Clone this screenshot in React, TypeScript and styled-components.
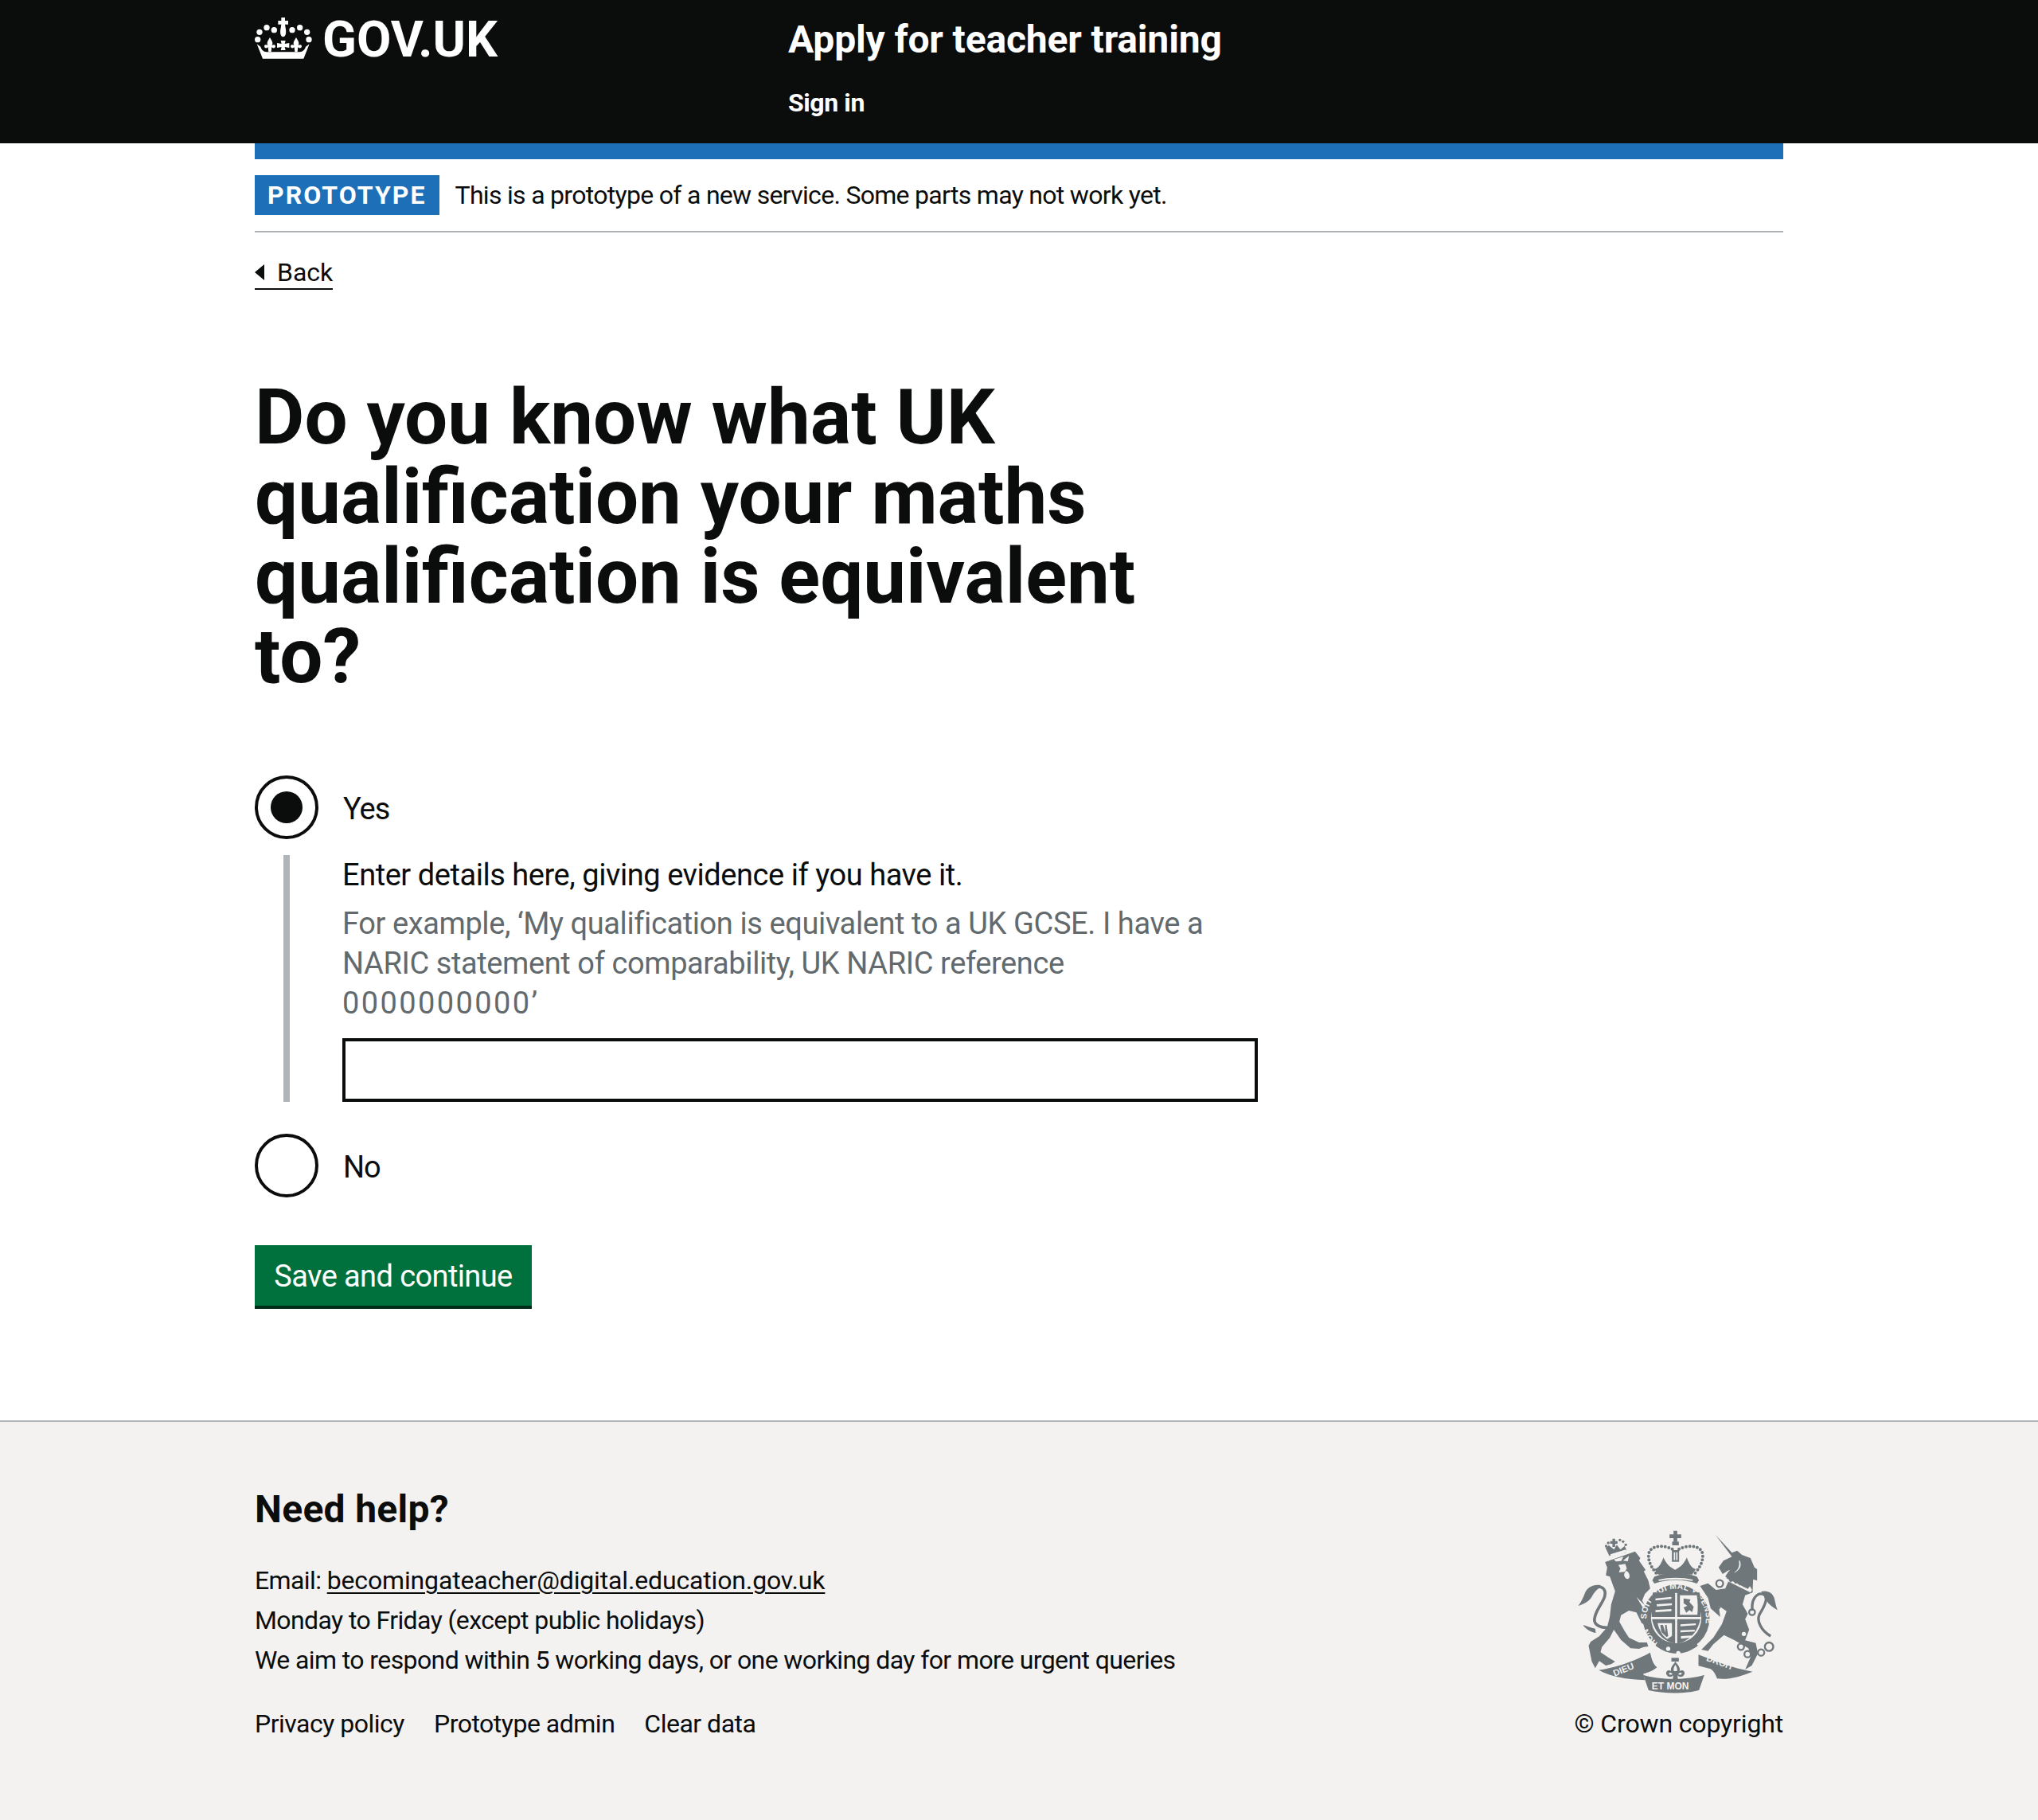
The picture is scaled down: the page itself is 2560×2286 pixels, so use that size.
import React from "react";
import styled, { createGlobalStyle } from "styled-components";

const Global = createGlobalStyle`
  html, body { margin: 0; padding: 0; background: #fff; }
  body { font-family: Roboto, "Noto Sans", Arial, sans-serif; color: #0b0c0c; }
  * { box-sizing: border-box; }
`;

const Page = styled.div`
  width: 2560px;
  min-height: 2286px;
  display: flex;
  flex-direction: column;
`;
const Header = styled.header`
  background: #0b0c0c;
  height: 180px;
  padding: 20px 320px 0;
  display: flex;
  color: #fff;
`;
const LogoBox = styled.div`
  width: 670px;
  display: flex;
  align-items: flex-start;
  gap: 13px;
`;
const LogoSvg = styled.svg`
  display: block;
  margin-top: 1px;
`;
const LogoText = styled.span`
  font-size: 63px;
  line-height: 60px;
  font-weight: 700;
`;
const ServiceBox = styled.div`
  display: flex;
  flex-direction: column;
  gap: 28px;
`;
const ServiceName = styled.div`
  font-size: 48px;
  line-height: 60px;
  font-weight: 700;
  letter-spacing: -0.15px;
`;
const SignIn = styled.div`
  font-size: 32px;
  line-height: 42px;
  font-weight: 700;
  letter-spacing: -0.4px;
`;
const Container = styled.div`
  width: 1920px;
  margin: 0 320px;
`;
const BlueBar = styled.div`
  height: 20px;
  background: #1d70b8;
`;
const Banner = styled.div`
  display: flex;
  align-items: center;
  gap: 20px;
  padding: 20px 0;
  height: 92px;
  border-bottom: 2px solid #b1b4b6;
`;
const Tag = styled.strong`
  background: #1d70b8;
  color: #fff;
  font-size: 32px;
  line-height: 50px;
  height: 50px;
  padding: 0 16px;
  letter-spacing: 2.05px;
  font-weight: 700;
`;
const BannerText = styled.span`
  font-size: 32px;
  line-height: 40px;
  letter-spacing: -0.7px;
`;
const BackLink = styled.a`
  display: inline-flex;
  align-items: center;
  margin-top: 30px;
  height: 42px;
  border-bottom: 2px solid #0b0c0c;
  font-size: 32px;
  line-height: 40px;
  color: #0b0c0c;
  &::before {
    content: "";
    width: 0;
    height: 0;
    margin-right: 16px;
    border-style: solid;
    border-width: 10px 12px 10px 0;
    border-color: transparent #0b0c0c transparent transparent;
  }
`;
const Heading = styled.h1`
  margin: 110px 0 0;
  width: 1150px;
  font-size: 96px;
  line-height: 100px;
  font-weight: 700;
`;
const Form = styled.form`
  margin-top: 100px;
  display: flex;
  flex-direction: column;
`;
const RadioRow = styled.div`
  display: flex;
  align-items: center;
  gap: 30px;
  height: 80px;
`;
const RadioCircle = styled.span<{ $checked?: boolean }>`
  width: 80px;
  height: 80px;
  border: 4px solid #0b0c0c;
  border-radius: 50%;
  display: flex;
  align-items: center;
  justify-content: center;
  &::after {
    content: "";
    display: ${(p) => (p.$checked ? "block" : "none")};
    width: 40px;
    height: 40px;
    border-radius: 50%;
    background: #0b0c0c;
  }
`;
const RadioLabel = styled.span`
  font-size: 38px;
  line-height: 50px;
  padding: 3px 0 0 1px;
  letter-spacing: -1px;
`;
const Conditional = styled.div`
  margin: 20px 0 40px 36px;
  padding-left: 66px;
  border-left: 8px solid #b1b4b6;
  height: 310px;
`;
const FieldLabel = styled.div`
  font-size: 38px;
  line-height: 50px;
  letter-spacing: -0.45px;
`;
const Hint = styled.div`
  margin-top: 11px;
  width: 1120px;
  font-size: 38px;
  line-height: 50px;
  color: #626a6e;
  letter-spacing: -0.4px;
`;
const HintDigits = styled.span`
  letter-spacing: 2.4px;
`;
const TextInput = styled.input`
  display: block;
  margin-top: 19px;
  width: 1150px;
  height: 80px;
  border: 4px solid #0b0c0c;
  border-radius: 0;
  background: #fff;
`;
const Button = styled.button`
  margin-top: 60px;
  width: 348px;
  height: 80px;
  align-self: flex-start;
  border: 0;
  border-bottom: 4px solid #002d18;
  border-radius: 0;
  background: #00703c;
  color: #fff;
  font-family: inherit;
  font-size: 38px;
  line-height: 50px;
  letter-spacing: -0.6px;
  padding: 2px 0 0;
`;
const Footer = styled.footer`
  margin-top: 140px;
  flex: 1;
  background: #f3f2f1;
  border-top: 2px solid #b1b4b6;
  padding: 80px 320px 0;
  display: flex;
  justify-content: space-between;
`;
const FooterMain = styled.div`
  display: flex;
  flex-direction: column;
`;
const HelpTitle = styled.h2`
  margin: 0 0 34px;
  font-size: 48px;
  line-height: 60px;
  font-weight: 700;
  letter-spacing: 0.3px;
`;
const FooterLine = styled.div`
  font-size: 32px;
  line-height: 50px;
  letter-spacing: -0.6px;
`;
const FooterAnchor = styled.a`
  color: #0b0c0c;
  letter-spacing: -0.15px;
  text-decoration: underline;
  text-decoration-thickness: 2px;
  text-underline-offset: 4px;
`;
const FooterLinks = styled.div`
  display: flex;
  gap: 37px;
  margin-top: 30px;
`;
const PlainLink = styled.a`
  font-size: 32px;
  line-height: 50px;
  color: #0b0c0c;
  letter-spacing: -0.5px;
`;
const CrestBox = styled.div`
  display: flex;
  flex-direction: column;
  align-items: flex-end;
  margin-top: 56px;
`;
const CrestSvg = styled.svg`
  display: block;
  margin-right: 6px;
`;
const Copyright = styled.div`
  margin-top: 13px;
  font-size: 32px;
  line-height: 50px;
  letter-spacing: -0.15px;
`;

const CrownLogo = () => (
  <LogoSvg width="72" height="53" viewBox="60 62 216 159" fill="#fff">
    <path d="M160 65h14v12h12v14h-12l2 14c3 12 3 33-9 33s-12-21-9-33l2-14h-12V77h12z" />
    <circle cx="133" cy="112" r="11" /><circle cx="105" cy="103" r="11" /><circle cx="78" cy="120" r="11" /><circle cx="71" cy="148" r="11" />
    <circle cx="201" cy="112" r="11" /><circle cx="230" cy="103" r="11" /><circle cx="257" cy="120" r="11" /><circle cx="264" cy="148" r="11" />
    <path d="M158 152h18l-3 12 17-3v18l-17-3 3 12h-18l3-12-17 3v-18l17 3z" />
    <path d="M117 140c4 8 10 14 10 22 0 4-1 6-3 8 4-2 14-5 14 4 0 6-8 9-14 3l-2 17h-10l-2-17c-6 6-14 3-14-3 0-9 10-6 14-4-2-2-3-4-3-8 0-8 6-14 10-22z" />
    <path d="M216 140c4 8 10 14 10 22 0 4-1 6-3 8 4-2 14-5 14 4 0 6-8 9-14 3l-2 17h-10l-2-17c-6 6-14 3-14-3 0-9 10-6 14-4-2-2-3-4-3-8 0-8 6-14 10-22z" />
    <path d="M68 165l14 10c4 12 10 18 22 20h126c12-2 18-8 22-20l14-10-22 55H90z" />
  </LogoSvg>
);

const C = "#6f777b";
const B = "#f3f2f1";
const Crest = () => (
  <CrestSvg width="252" height="205" viewBox="70 65 755 615" fill={C}>
    <path d="M188 162l-14-30 12-10 20 16 10-18 14 18 16-14 6 14-2 12z" />
    <path d="M200 97h10v9h9v10h-9v12h-10v-12h-9v-10h9z" />
    <g><circle cx="176" cy="125" r="5" /><circle cx="184" cy="113" r="5" /><circle cx="228" cy="102" r="5" /><circle cx="240" cy="108" r="5" /><circle cx="250" cy="120" r="5" /></g>
    <path d="M192 156l58-18 3 10-58 18z" fill={B} />
    <path d="M172 185L285 145L305 170L300 180L325 215L318 220L335 255L342 285L322 305L312 330L322 350L345 385L345 410L330 425L310 415L290 375L262 368L232 385L226 410L246 445L262 470L300 488L330 488L335 503L318 505L300 512L268 510L232 478L205 440L190 470L160 505L155 525L185 545L210 560L195 570L175 575L150 558L135 585L122 560L110 500L118 485L150 465L180 430L190 390L195 345L210 295L190 240L175 235L180 205Z" />
    <path d="M205 175l36-10-8 16-20 2zM262 162l-22 18 18 2z" fill={B} />
    <path d="M222 196l26-4 6 18-8 12-22 2 6-14z" fill={B} />
    <path d="M250 218c12 2 18 20 12 28-7 8-20-4-18-16z" fill={B} />
    <path d="M150 278c22 2 28 24 16 48-12 26-32 46-34 76-1 20 24 32 52 30" fill="none" stroke={C} strokeWidth="11" />
    <path d="M155 272c-30-4-50 10-58 28-6 16-14 36-26 50 26-8 44-20 52-36 8-14 18-26 30-32z" />
    <path d="M135 436c-16-2-30-10-46-14 8 14 26 26 48 30z" />
    <path d="M290 316l34 34-10 6z" fill={B} />
    <path d="M430 67h14v14h15v14h-15v14h-14V95h-15V81h15z" />
    <rect x="425" y="108" width="25" height="14" />
    <rect x="424" y="140" width="27" height="44" />
    <rect x="431" y="148" width="5" height="30" fill={B} /><rect x="440" y="148" width="5" height="30" fill={B} />
    <g fill="none" stroke={C} strokeWidth="12" strokeDasharray="0 14" strokeLinecap="round">
      <path d="M364 226c-26-30-34-62-24-82 12-22 60-24 88-6" />
      <path d="M512 226c26-30 34-62 24-82-12-22-60-24-88-6" />
    </g>
    <path d="M358 212c14-4 22-12 34-44 10 22 22 36 44 46 22-10 34-24 44-46 12 32 20 40 34 44l-14 20H372z" />
    <path d="M358 240c50-18 110-18 160 0l8 14-8 12c-50-18-110-18-160 0l-8-12z" />
    <path d="M372 252c40-10 92-10 132 0l-4 4c-40-8-84-8-124 0z" fill={B} />
    <circle cx="440" cy="396" r="126" />
    <circle cx="440" cy="396" r="95" fill={B} />
    <path id="garterTop" d="M331 424a112 112 0 1 1 218 0a112 112 0 0 1-28 52" fill="none" />
    <path id="garterLeft" d="M372 490a116 116 0 0 1-42-62" fill="none" />
    <text fill={B} fontFamily="Liberation Sans, Arial, sans-serif" fontSize="31" fontWeight="700" letterSpacing="1"><textPath href="#garterTop" startOffset="24">SOIT QUI MAL Y PENSE</textPath></text>
    <text fill={B} fontFamily="Liberation Sans, Arial, sans-serif" fontSize="31" fontWeight="700"><textPath href="#garterLeft">HON</textPath></text>
    <path d="M352 300h84v92h-88c-2-30-2-62 4-92zM444 300h84c6 30 6 62 4 92h-88z" />
    <path d="M349 400h87v92c-44-8-78-44-87-92zM444 400h87c-9 48-43 84-87 92z" />
    <g fill={B}>
      <path d="M362 322l60-6v8l-60 6zM366 344l58-4v8l-56 4zM362 366l60-4v8l-60 4z" />
      <path d="M454 310h64c4 26 4 52 2 74h-66z" />
      <path d="M370 415h54v48l-18 12c-18-12-30-34-36-60z" />
      <path d="M456 420l58-4v7l-58 4zM456 442l54-2v7l-54 3zM458 464l42-2v7l-42 5z" />
    </g>
    <path d="M468 322l26 4-4 10 16 18-6 20-10-8-12 10-10-20 14-6-14-10z" />
    <path d="M380 422l4 26 20 20 6-4-6-42h-6l2 30-10-30z" />
    <path d="M362 500c50 40 110 40 160 0l-18-28c-40 30-90 30-124 0z" />
    <circle cx="410" cy="512" r="8" fill={B} /><circle cx="448" cy="528" r="8" fill={B} />
    <path d="M588 82L650 150L670 142L688 158L720 170L735 205L745 212L745 255L730 250L728 300L700 310L690 345L710 380L700 400L715 440L700 480L740 490L748 530L725 575L700 590L722 540L712 510L660 480L620 460L580 495L560 520L535 515L580 470L612 420L630 370L600 350L606 392L570 360L560 320L530 275L560 265L590 290L625 285L640 250L625 240L640 215L615 230L600 205L618 180L650 165Z" />
    <path d="M628 222l16-8-8 8zM680 180c6 16 4 30-14 42l-8 4 4-4c14-10 18-26 14-42z" fill={B} />
    <path d="M622 238l6 16 92 46 6-10-8-14-8 10-6-16-10 10-6-16-10 10-6-16-10 10-6-16-10 10z" fill={B} />
    <path d="M630 246l6-10 6 8 8-6 6 10 8-6 6 10 8-4 6 10 8-4 6 10 8-2 8 10-4 14-84-42z" />
    <g fill="none" stroke={C} strokeWidth="7">
      <circle cx="604" cy="266" r="13" /><circle cx="592" cy="350" r="13" /><circle cx="726" cy="374" r="11" />
      <circle cx="684" cy="504" r="12" /><circle cx="709" cy="532" r="12" /><circle cx="760" cy="526" r="12" /><circle cx="790" cy="504" r="16" />
    </g>
    <circle cx="718" cy="420" r="8" fill={B} /><circle cx="695" cy="456" r="8" fill={B} />
    <path d="M728 368c-8-40 16-70 40-62 24 10 2 50-14 76-12 24 6 62 42 82" fill="none" stroke={C} strokeWidth="10" />
    <path d="M760 296c26-6 44 6 50 26 4 16 6 30 12 44-18-10-34-22-42-36-6-12-14-24-20-34z" />
    <path d="M148 592c70-10 140-36 194-66 6 26 10 42 26 56-20 16-42 22-52 24l6 24c-60-2-120-10-174-38z" />
    <path d="M524 534c56 20 120 50 204 64-44 18-92 32-134 26-6-16-12-28-24-36l-46-12z" />
    <path d="M316 610c60 20 170 20 230 0l-20 58c-50 14-134 14-190 0z" />
    <g fill={B} fontFamily="Liberation Sans, Arial, sans-serif" fontSize="34" fontWeight="700">
      <text x="208" y="616" transform="rotate(-22 208 616)">DIEU</text>
      <text x="348" y="664" fontSize="36">ET MON</text>
      <text x="552" y="556" transform="rotate(20 552 556)">DROIT</text>
    </g>
    <path d="M437 560c8 12 20 22 16 36 10-8 22 0 18 12-4 10-18 14-26 4l2 16h-20l2-16c-8 10-22 6-26-4-4-12 8-20 18-12-4-14 8-24 16-36z" />
    <path d="M437 572c5 8 8 14 6 24h-12c-2-10 1-16 6-24zM412 604c6-3 10-2 14 3-5 4-11 4-14-3zM462 604c-6-3-10-2-14 3 5 4 11 4 14-3z" fill={B} />
    <rect x="422" y="546" width="28" height="14" />
  </CrestSvg>
);

export default function App() {
  return (
    <Page>
      <Global />
      <Header>
        <LogoBox>
          <CrownLogo />
          <LogoText>GOV.UK</LogoText>
        </LogoBox>
        <ServiceBox>
          <ServiceName>Apply for teacher training</ServiceName>
          <SignIn>Sign in</SignIn>
        </ServiceBox>
      </Header>
      <Container>
        <BlueBar />
        <Banner>
          <Tag>PROTOTYPE</Tag>
          <BannerText>This is a prototype of a new service. Some parts may not work yet.</BannerText>
        </Banner>
        <BackLink>Back</BackLink>
        <Heading>Do you know what UK qualification your maths qualification is equivalent to?</Heading>
        <Form>
          <RadioRow>
            <RadioCircle $checked />
            <RadioLabel>Yes</RadioLabel>
          </RadioRow>
          <Conditional>
            <FieldLabel>Enter details here, giving evidence if you have it.</FieldLabel>
            <Hint>For example, ‘My qualification is equivalent to a UK GCSE. I have a NARIC statement of comparability, UK NARIC reference <HintDigits>0000000000</HintDigits>’</Hint>
            <TextInput />
          </Conditional>
          <RadioRow>
            <RadioCircle />
            <RadioLabel>No</RadioLabel>
          </RadioRow>
          <Button type="button">Save and continue</Button>
        </Form>
      </Container>
      <Footer>
        <FooterMain>
          <HelpTitle>Need help?</HelpTitle>
          <FooterLine>Email: <FooterAnchor>becomingateacher@digital.education.gov.uk</FooterAnchor></FooterLine>
          <FooterLine>Monday to Friday (except public holidays)</FooterLine>
          <FooterLine>We aim to respond within 5 working days, or one working day for more urgent queries</FooterLine>
          <FooterLinks>
            <PlainLink>Privacy policy</PlainLink>
            <PlainLink>Prototype admin</PlainLink>
            <PlainLink>Clear data</PlainLink>
          </FooterLinks>
        </FooterMain>
        <CrestBox>
          <Crest />
          <Copyright>© Crown copyright</Copyright>
        </CrestBox>
      </Footer>
    </Page>
  );
}
